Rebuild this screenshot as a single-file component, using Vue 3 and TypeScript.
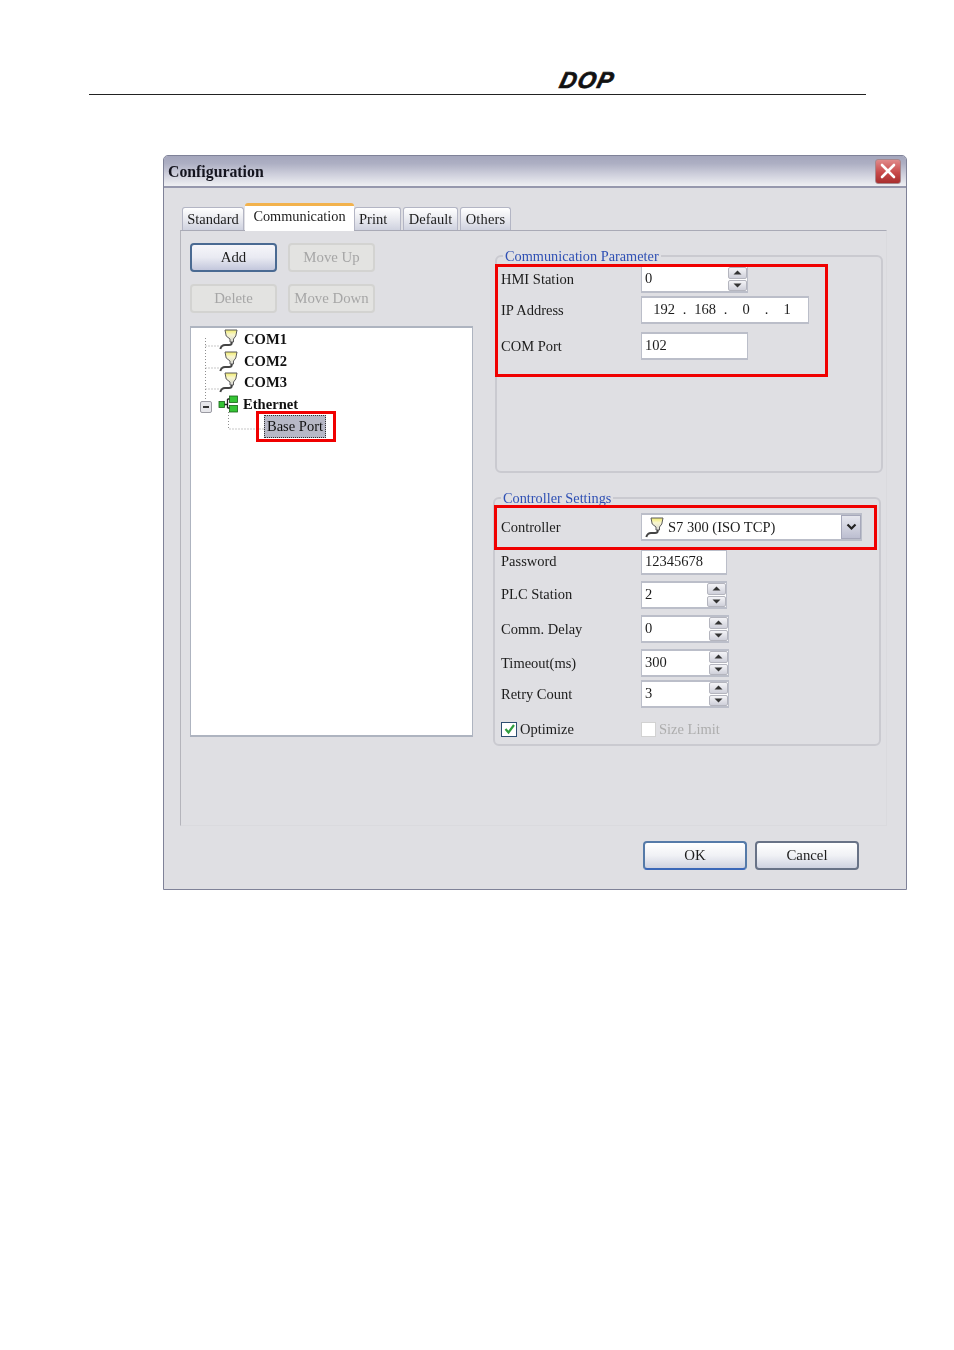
<script setup lang="ts">
interface Row { label: string; value: string; spin: boolean; cls: string; lblCls: string }

const tabs = ['Standard', 'Communication', 'Print', 'Default', 'Others']
const ports = ['COM1', 'COM2', 'COM3']
const octets = ['192', '168', '0', '1']
const lowerRows: Row[] = [
  { label: 'Password', value: '12345678', spin: false, cls: 'w86 h26', lblCls: 'up2' },
  { label: 'PLC Station', value: '2', spin: true, cls: 'w86', lblCls: 'up1' },
  { label: 'Comm. Delay', value: '0', spin: true, cls: 'w88', lblCls: '' },
  { label: 'Timeout(ms)', value: '300', spin: true, cls: 'w88', lblCls: '' },
  { label: 'Retry Count', value: '3', spin: true, cls: 'w88', lblCls: '' },
]
</script>

<template>
  <div class="page">
    <header class="doc-head">
      <span class="logo">DOP</span>
    </header>

    <section class="dialog">
      <div class="titlebar">
        <span class="title">Configuration</span>
        <span class="close">
          <svg width="16" height="16" viewBox="0 0 16 16"><path d="M2 2 L14 14 M14 2 L2 14" stroke="#fff" stroke-width="2.6" stroke-linecap="round" /></svg>
        </span>
      </div>

      <div class="body">
        <nav class="tabs">
          <span v-for="t in tabs" :key="t" class="tab" :class="['tab-' + t.toLowerCase(), { active: t === 'Communication' }]">{{ t }}</span>
        </nav>

        <div class="pane">
          <div class="left">
            <div class="btn-grid">
              <button class="btn focus">Add</button>
              <button class="btn off">Move Up</button>
              <button class="btn off">Delete</button>
              <button class="btn off">Move Down</button>
            </div>

            <div class="tree">
              <svg class="tree-lines" width="140" height="110" viewBox="0 0 140 110">
                <path d="M14.5 10 V72 M14.5 18 H30 M14.5 40 H30 M14.5 61 H30 M37.5 84 V101 H73" fill="none" stroke="#8e8e8e" stroke-dasharray="1 2" />
              </svg>
              <div v-for="p in ports" :key="p" class="node">
                <svg class="plug" width="20" height="21" viewBox="0 0 20 21">
                  <defs>
                    <linearGradient id="cup" x1="0" y1="0" x2="0" y2="1">
                      <stop offset="0" stop-color="#f1ec6c" />
                      <stop offset=".4" stop-color="#f8f6d0" />
                      <stop offset="1" stop-color="#d4d4d4" />
                    </linearGradient>
                  </defs>
                  <path d="M7 1 H19 L17.8 7 L15.5 10 V13 H12 V10 L8.2 7 Z" fill="url(#cup)" stroke="#5a5a5a" stroke-width="1" />
                  <path d="M13.7 13 V14 Q13.7 16 11 16 H7 Q3.5 16 2.3 20" fill="none" stroke="#444" stroke-width="2" />
                </svg>
                <b>{{ p }}</b>
              </div>
              <div class="node eth">
                <span class="expander"><i></i></span>
                <svg class="net" width="20" height="18" viewBox="0 0 20 18">
                  <path d="M6 9.5 H9.5 M9.5 4 V13 M9.5 4 H12 M9.5 13 H12" fill="none" stroke="#222" stroke-width="1.3" />
                  <rect x="1" y="6.5" width="5.5" height="6" fill="#35c435" stroke="#176017" stroke-width=".8" />
                  <rect x="11.5" y="1" width="8" height="6.5" fill="#35c435" stroke="#176017" stroke-width=".8" />
                  <rect x="11.5" y="10.5" width="8" height="6.5" fill="#35c435" stroke="#176017" stroke-width=".8" />
                </svg>
                <b>Ethernet</b>
              </div>
              <div class="subnode"><span class="selected">Base Port</span></div>
              <span class="mark mark-tree"></span>
            </div>
          </div>

          <div class="right">
            <div class="group g1">
              <span class="legend">Communication Parameter</span>
              <div class="rows rows1">
                <label class="lbl">HMI Station</label>
                <div class="field w107">
                  <span class="val">0</span>
                  <span class="spin">
                    <i><svg width="9" height="5" viewBox="0 0 9 5"><path d="M0.5 4.5 L4.5 0.5 L8.5 4.5 Z" fill="#333" /></svg></i>
                    <i><svg width="9" height="5" viewBox="0 0 9 5"><path d="M0.5 0.5 L4.5 4.5 L8.5 0.5 Z" fill="#333" /></svg></i>
                  </span>
                </div>
                <label class="lbl">IP Address</label>
                <div class="field ip">
                  <template v-for="(o, i) in octets" :key="o">
                    <span class="octet">{{ o }}</span>
                    <span v-if="i < 3" class="dot">.</span>
                  </template>
                </div>
                <label class="lbl">COM Port</label>
                <div class="field w107 h28"><span class="val">102</span></div>
              </div>
              <span class="mark mark-g1"></span>
            </div>

            <div class="group g2">
              <span class="legend">Controller Settings</span>
              <div class="rows rows2">
                <label class="lbl">Controller</label>
                <div class="field select">
                  <svg class="plug small" width="20" height="21" viewBox="0 0 20 21">
                    <path d="M7 1 H19 L17.8 7 L15.5 10 V13 H12 V10 L8.2 7 Z" fill="url(#cup)" stroke="#5a5a5a" stroke-width="1" />
                    <path d="M13.7 13 V14 Q13.7 16 11 16 H7 Q3.5 16 2.3 20" fill="none" stroke="#444" stroke-width="2" />
                  </svg>
                  <span class="sel-text">S7 300 (ISO TCP)</span>
                  <span class="arrow"><svg width="11" height="8" viewBox="0 0 11 8"><path d="M1.5 1.5 L5.5 5.5 L9.5 1.5" fill="none" stroke="#222" stroke-width="2.2" /></svg></span>
                </div>
                <template v-for="r in lowerRows" :key="r.label">
                  <label class="lbl" :class="r.lblCls">{{ r.label }}</label>
                  <div class="field" :class="r.cls">
                    <span class="val">{{ r.value }}</span>
                    <span v-if="r.spin" class="spin">
                      <i><svg width="9" height="5" viewBox="0 0 9 5"><path d="M0.5 4.5 L4.5 0.5 L8.5 4.5 Z" fill="#333" /></svg></i>
                      <i><svg width="9" height="5" viewBox="0 0 9 5"><path d="M0.5 0.5 L4.5 4.5 L8.5 0.5 Z" fill="#333" /></svg></i>
                    </span>
                  </div>
                </template>
                <div class="check">
                  <span class="box on"><svg width="13" height="12" viewBox="0 0 13 12"><path d="M2.5 6 L5.5 9.5 L11 2" fill="none" stroke="#2f9e3f" stroke-width="2.2" /></svg></span>
                  <span>Optimize</span>
                </div>
                <div class="check dim">
                  <span class="box"></span>
                  <span>Size Limit</span>
                </div>
              </div>
              <span class="mark mark-g2"></span>
            </div>
          </div>
        </div>

        <footer class="foot">
          <button class="btn wide ok">OK</button>
          <button class="btn wide">Cancel</button>
        </footer>
      </div>
    </section>
  </div>
</template>

<style>
html, body { margin: 0; background: #fff; }
</style>

<style scoped>
.page {
  width: 954px;
  height: 1350px;
  overflow: hidden;
  background: #fff;
  font-family: "Liberation Serif", "Times New Roman", serif;
  font-size: 14.5px;
  color: #1c1c1c;
}
.doc-head {
  box-sizing: border-box;
  width: 777px;
  height: 95px;
  margin-left: 89px;
  padding: 69px 0 0 471px;
  border-bottom: 1px solid #222;
}
.logo {
  display: block;
  width: 58px;
  font: italic 700 23px/23px "Liberation Sans", sans-serif;
  letter-spacing: 1.5px;
  color: #111;
  -webkit-text-stroke: .7px #111;
  transform: skewX(-14deg);
  transform-origin: left center;
}
.dialog {
  box-sizing: border-box;
  width: 744px;
  height: 735px;
  margin: 60px 0 0 163px;
  background: #dfdfe3;
  border: 1px solid #7f8298;
  border-top-left-radius: 5px;
  border-top-right-radius: 5px;
  filter: blur(.35px);
}
.titlebar {
  box-sizing: border-box;
  height: 32px;
  display: flex;
  align-items: center;
  justify-content: space-between;
  padding: 0 5px 0 4px;
  border-bottom: 2px solid #9698ad;
  background: linear-gradient(#a4a6bc 0%, #adafc3 25%, #cdcedb 60%, #eff0f3 100%);
  border-top-left-radius: 4px;
  border-top-right-radius: 4px;
}
.title { font-weight: 700; font-size: 15.8px; color: #14141e; padding-top: 2px; }
.close {
  width: 26px;
  height: 25px;
  display: flex;
  align-items: center;
  justify-content: center;
  border-radius: 3px;
  background: linear-gradient(#e08a8a, #c84a4a 55%, #a82e2e);
  border: 1px solid #a8878c;
  box-sizing: border-box;
}
.body { padding: 15px 0 0 16px; }
.tabs {
  display: flex;
  align-items: flex-end;
  height: 27px;
  padding-left: 2px;
}
.tab {
  box-sizing: border-box;
  height: 23px;
  display: flex;
  align-items: center;
  justify-content: center;
  border: 1px solid #b3b5c4;
  border-bottom: 0;
  border-radius: 3px 3px 0 0;
  background: linear-gradient(#ffffff, #ebecf1 45%, #cfd2df);
}
.tab-standard { width: 62px; margin-right: 1px; }
.tab-communication { width: 109px; }
.tab-print { width: 47px; margin-right: 2px; justify-content: flex-start; padding-left: 4px; }
.tab-default { width: 55px; margin-right: 2px; }
.tab-others { width: 51px; letter-spacing: .15px; }
.tab.active {
  height: 28px;
  margin-bottom: -1px;
  position: relative;
  z-index: 1;
  background: #fff;
  border: 0;
  border-top: 3px solid #f2b24c;
  padding-bottom: 5px;
  font-size: 14.3px;
}
.pane {
  box-sizing: border-box;
  width: 707px;
  height: 596px;
  display: flex;
  gap: 20px;
  padding: 12px 0 0 9px;
  border-top: 1px solid #a9aab6;
  border-left: 1px solid #b4b4bb;
  border-right: 1px solid #dadade;
  border-bottom: 1px solid #dadade;
}
.left { width: 283px; flex: none; }
.btn-grid {
  display: grid;
  grid-template-columns: 87px 87px;
  grid-auto-rows: 29px;
  column-gap: 11px;
  row-gap: 12px;
}
.btn {
  box-sizing: border-box;
  padding: 0;
  font: inherit;
  font-size: 14.8px;
  color: #1c1c1c;
  border: 1px solid #5a6474;
  border-radius: 4px;
  background: linear-gradient(#ffffff, #f0f1f5 50%, #cfd2e0);
}
.btn.focus { border: 2px solid #4a6a92; background: linear-gradient(#f6f6fa, #e9eaf2 50%, #c3c7dc); }
.btn.off { border: 2px solid #d3d3d1; background: #e3e3e1; color: #a6a6a6; }
.tree {
  position: relative;
  box-sizing: border-box;
  height: 411px;
  margin-top: 13px;
  background: #fff;
  border: 1px solid #aeb4c0;
  border-width: 2px 1px;
  font-size: 14.6px;
  color: #111;
}
.tree-lines { position: absolute; left: 0; top: 0; }
.node {
  position: relative;
  height: 21.7px;
  display: flex;
  align-items: center;
  padding-left: 27px;
  gap: 6px;
}
.node .plug { margin-top: 1px; }
.node b { line-height: 20px; }
.eth { padding-left: 9px; gap: 0; }
.expander {
  box-sizing: border-box;
  width: 12px;
  height: 12px;
  margin: 6px 6px 0 0;
  display: flex;
  align-items: center;
  justify-content: center;
  background: #e6e6ea;
  border: 1px solid #9a9aa2;
  border-radius: 2px;
}
.expander i { display: block; width: 6px; height: 2px; background: #333; }
.net { margin-right: 5px; }
.subnode { position: relative; padding: 0 0 0 73px; }
.selected {
  box-sizing: border-box;
  display: block;
  width: 62px;
  height: 23px;
  line-height: 21px;
  text-align: center;
  font-size: 14.5px;
  background: #b7b8c6;
  border: 1px dotted #333;
}
.right { flex: 1; }
.group {
  position: relative;
  box-sizing: border-box;
  width: 388px;
  border: 2px solid #cacad0;
  border-radius: 6px;
  padding-left: 4px;
}
.g1 { height: 218px; margin: 12px 0 0 2px; padding-top: 8px; }
.g2 { height: 249px; margin-top: 24px; padding-top: 14px; padding-left: 6px; }
.legend {
  position: absolute;
  top: -9px;
  left: 6px;
  padding: 0 2px;
  background: #dfdfe3;
  color: #2f50b4;
  font-size: 14.3px;
  line-height: 16px;
  white-space: nowrap;
}
.rows {
  display: grid;
  grid-template-columns: 140px 1fr;
  align-items: start;
}
.rows1 { grid-template-rows: 31px 36px 28px; }
.rows2 { grid-template-rows: 36px 32px 34px 34px 31px 42px 24px; }
.lbl { line-height: 28px; white-space: nowrap; }
.lbl.up2 { line-height: 24px; }
.lbl.up1 { line-height: 26px; }
.field {
  box-sizing: border-box;
  height: 28px;
  display: flex;
  align-items: center;
  justify-content: space-between;
  padding-left: 3px;
  background: #fff;
  border: 1px solid #bbbec9;
  border-width: 2px 1px;
}
.val, .octet, .dot { position: relative; bottom: 1px; }
.w107 { width: 107px; }
.w86 { width: 86px; }
.w88 { width: 88px; }
.h26 { height: 26px; }
.h28 { height: 28px; }
.ip { width: 168px; justify-content: flex-start; padding-left: 10px; }
.octet { width: 24px; text-align: center; }
.dot { width: 17px; text-align: center; }
.spin { display: flex; flex-direction: column; gap: 1px; }
.spin i {
  box-sizing: border-box;
  width: 19px;
  height: 11.5px;
  display: flex;
  align-items: center;
  justify-content: center;
  border: 1px solid #b4b5be;
  border-radius: 2px;
  background: linear-gradient(#f4f4f7, #cfd0da);
}
.select { width: 221px; justify-content: flex-start; padding: 0; }
.plug.small { margin-left: 2px; flex: none; }
.sel-text { margin-left: 4px; flex: 1; }
.arrow {
  box-sizing: border-box;
  width: 20px;
  height: 100%;
  display: flex;
  align-items: center;
  justify-content: center;
  border: 1px solid #a6a8ba;
  background: linear-gradient(#e6e7ee, #bcbed0);
}
.check { display: flex; align-items: center; gap: 3px; height: 14px; line-height: 14px; }
.check.dim { color: #adadad; }
.box {
  box-sizing: border-box;
  width: 15px;
  height: 15px;
  flex: none;
  display: flex;
  align-items: center;
  justify-content: center;
  background: #fff;
  border: 1px solid #d2d2d2;
}
.box.on { width: 16px; border: 1px solid #2c4d70; }
.foot {
  display: flex;
  justify-content: flex-end;
  gap: 8px;
  margin-top: 15px;
  padding-right: 47px;
}
.wide { width: 104px; height: 29px; border: 2px solid #687286; }
.ok { border-color: #557aa8; border-bottom-color: #3a67b8; }
.mark {
  position: absolute;
  box-sizing: border-box;
  border: 3px solid #f00000;
  pointer-events: none;
}
.mark-tree { left: 65px; top: 83px; width: 80px; height: 31px; }
.mark-g1 { left: -2px; top: 7px; width: 333px; height: 113px; }
.mark-g2 { left: -1px; top: 6px; width: 383px; height: 45px; }
</style>
